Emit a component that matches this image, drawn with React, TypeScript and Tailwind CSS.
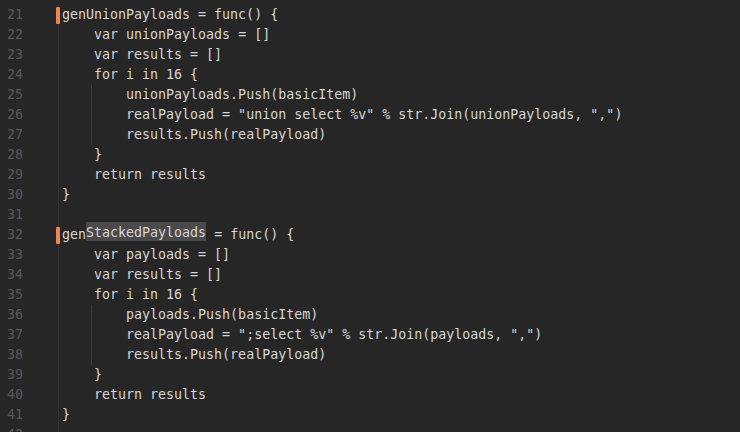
import React from "react";

type Line = { n: number; indent: number; text: React.ReactNode; marker?: boolean; guide?: boolean };

const lines: Line[] = [
  { n: 21, indent: 0, text: "genUnionPayloads = func() {", marker: true },
  { n: 22, indent: 1, text: "var unionPayloads = []" },
  { n: 23, indent: 1, text: "var results = []" },
  { n: 24, indent: 1, text: "for i in 16 {" },
  { n: 25, indent: 2, text: "unionPayloads.Push(basicItem)", guide: true },
  { n: 26, indent: 2, text: 'realPayload = "union select %v" % str.Join(unionPayloads, ",")', guide: true },
  { n: 27, indent: 2, text: "results.Push(realPayload)", guide: true },
  { n: 28, indent: 1, text: "}" },
  { n: 29, indent: 1, text: "return results" },
  { n: 30, indent: 0, text: "}" },
  { n: 31, indent: 0, text: "" },
  {
    n: 32,
    indent: 0,
    marker: true,
    text: (
      <>
        gen
        <span className="inline-block h-[19px] -mt-[3px] align-top pt-[2px] leading-[17px] bg-[#4a4a4b]">StackedPayloads</span>
        {" = func() {"}
      </>
    ),
  },
  { n: 33, indent: 1, text: "var payloads = []" },
  { n: 34, indent: 1, text: "var results = []" },
  { n: 35, indent: 1, text: "for i in 16 {" },
  { n: 36, indent: 2, text: "payloads.Push(basicItem)", guide: true },
  { n: 37, indent: 2, text: 'realPayload = ";select %v" % str.Join(payloads, ",")', guide: true },
  { n: 38, indent: 2, text: "results.Push(realPayload)", guide: true },
  { n: 39, indent: 1, text: "}" },
  { n: 40, indent: 1, text: "return results" },
  { n: 41, indent: 0, text: "}" },
  { n: 42, indent: 0, text: "" },
];

export default function App() {
  return (
    <div
      className="w-[740px] h-[432px] overflow-hidden bg-[#262627] pt-[5px] text-[13.3px] leading-[20px] text-[#d6d6d6]"
      style={{ fontFamily: '"DejaVu Sans Mono", "Liberation Mono", monospace' }}
    >
      {lines.map((l) => (
        <div key={l.n} className="relative flex h-[20px]">
          <div className="w-[58px] shrink-0 pl-[7px] text-[#58585a]">{l.n}</div>
          <div className="w-px shrink-0 bg-[#363638]" />
          <div className="relative whitespace-pre pl-[3px]">
            {l.guide && <div className="absolute left-[32px] top-0 h-[20px] w-px bg-[#3a3a3c]" />}
            {" ".repeat(l.indent * 4)}
            {l.text}
          </div>
          {l.marker && <div className="absolute left-[56px] top-[2px] h-[17px] w-[4px] rounded-[1px] bg-[#ee8650]" />}
        </div>
      ))}
    </div>
  );
}
